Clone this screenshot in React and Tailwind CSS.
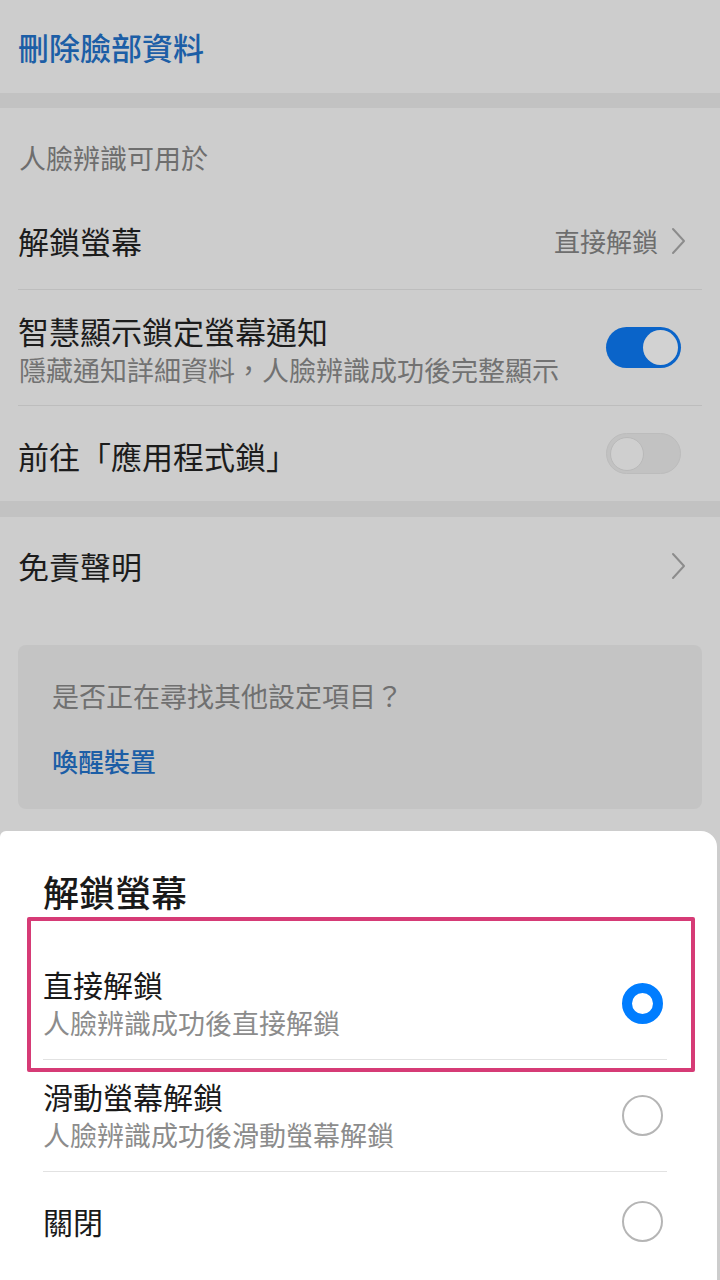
import React from "react";

const font = { fontFamily: '"Noto Sans CJK TC", "Noto Sans", sans-serif' };

function Chevron() {
    return (
        <svg width="16" height="28" viewBox="0 0 16 28" fill="none">
            <polyline points="3,2 14,14 3,26" stroke="#8c8c8c" strokeWidth="2" strokeLinecap="round" strokeLinejoin="round" />
        </svg>
    );
}

function Toggle({ on }) {
    return on ? (
        <div className="w-[75px] h-[41px] rounded-full bg-[#0a64c9] flex items-center justify-end pr-[3px]">
            <div className="w-[35px] h-[35px] rounded-full bg-[#d2d2d2]" />
        </div>
    ) : (
        <div className="w-[75px] h-[41px] rounded-full bg-[#c2c2c2] border border-[#bcbcbc] flex items-center pl-[3px]">
            <div className="w-[34px] h-[34px] rounded-full bg-[#cfcfcf] border border-[#b9b9b9]" />
        </div>
    );
}

function Radio({ checked }) {
    return checked ? (
        <div className="w-[41px] h-[41px] rounded-full border-[10px] border-[#007dff] bg-white mr-[4px]" />
    ) : (
        <div className="w-[41px] h-[41px] rounded-full border-2 border-[#b5b5b5] bg-white mr-[4px]" />
    );
}

const options = [
    { title: "直接解鎖", sub: "人臉辨識成功後直接解鎖", checked: true },
    { title: "滑動螢幕解鎖", sub: "人臉辨識成功後滑動螢幕解鎖", checked: false },
    { title: "關閉", sub: null, checked: false },
];

export default function App() {
    return (
        <div className="w-[720px] h-[1280px] bg-[#cdcdcd] flex flex-col overflow-hidden relative" style={font}>
            {/* top action */}
            <div className="h-[93px] flex items-center pl-[18px]">
                <span className="text-[31px] leading-[36px] text-[#1c5ea6] font-medium">刪除臉部資料</span>
            </div>
            <div className="h-[15px] bg-[#c2c2c2]" />

            {/* face unlock uses */}
            <div className="h-[84px] pl-[19px] pt-[34px]">
                <span className="text-[27px] leading-[32px] text-[#6e6e6e]">人臉辨識可用於</span>
            </div>
            <div className="mx-[18px]">
                <div className="h-[98px] flex items-center justify-between border-b border-[#bdbdbd]">
                    <span className="text-[31px] leading-[36px] text-[#1c1c1c]">解鎖螢幕</span>
                    <div className="flex items-center gap-[12px] pr-[16px]">
                        <span className="text-[26px] leading-[32px] text-[#6e6e6e]">直接解鎖</span>
                        <Chevron />
                    </div>
                </div>
                <div className="h-[116px] flex items-center justify-between border-b border-[#bdbdbd] pt-[6px]">
                    <div className="flex flex-col gap-[3px]">
                        <span className="text-[31px] leading-[36px] text-[#1c1c1c]">智慧顯示鎖定螢幕通知</span>
                        <span className="text-[27px] leading-[36px] text-[#727272] pl-[1px]">隱藏通知詳細資料，人臉辨識成功後完整顯示</span>
                    </div>
                    <div className="pr-[21px] -mt-[6px]">
                        <Toggle on />
                    </div>
                </div>
                <div className="h-[95px] flex items-center justify-between pt-[5px]">
                    <span className="text-[31px] leading-[36px] text-[#1c1c1c]">前往「應用程式鎖」</span>
                    <div className="pr-[21px] -mt-[5px]">
                        <Toggle />
                    </div>
                </div>
            </div>
            <div className="h-[16px] bg-[#c2c2c2]" />

            <div className="h-[98px] mx-[18px] flex items-center justify-between">
                <span className="text-[31px] leading-[36px] text-[#1c1c1c]">免責聲明</span>
                <div className="pr-[16px]">
                    <Chevron />
                </div>
            </div>

            {/* search suggestion card */}
            <div className="mt-[30px] mx-[18px] h-[164px] rounded-[8px] bg-[#c4c4c4] pl-[34px] pt-[35px] flex flex-col">
                <span className="text-[27px] leading-[32px] text-[#707070]">是否正在尋找其他設定項目？</span>
                <span className="mt-[33px] text-[26px] leading-[32px] text-[#1c5ea6] font-medium">喚醒裝置</span>
            </div>

            {/* bottom sheet */}
            <div className="mt-[22px] w-[717px] flex-1 bg-white rounded-tl-[6px] rounded-tr-[16px] relative">
                <div className="pl-[43px] pt-[38px] h-[117px]">
                    <span className="text-[36px] leading-[44px] text-[#191919] font-medium">解鎖螢幕</span>
                </div>
                <div className="pl-[43px] pr-[50px]">
                    {options.map((o) => (
                        <div
                            key={o.title}
                            className={
                                o.sub
                                    ? "h-[112px] flex items-center justify-between border-b border-[#e2e2e2]"
                                    : "h-[98px] flex items-center justify-between"
                            }
                        >
                            <div className="flex flex-col gap-[3px]">
                                <span className="text-[30px] leading-[36px] text-[#191919]">{o.title}</span>
                                {o.sub && <span className="text-[27px] leading-[36px] text-[#8c8c8c]">{o.sub}</span>}
                            </div>
                            <Radio checked={o.checked} />
                        </div>
                    ))}
                </div>
                {/* highlight annotation */}
                <div className="absolute left-[27px] top-[86px] w-[668px] h-[155px] border-[4px] border-[#d63b76] rounded-[2px] pointer-events-none" />
            </div>
        </div>
    );
}
